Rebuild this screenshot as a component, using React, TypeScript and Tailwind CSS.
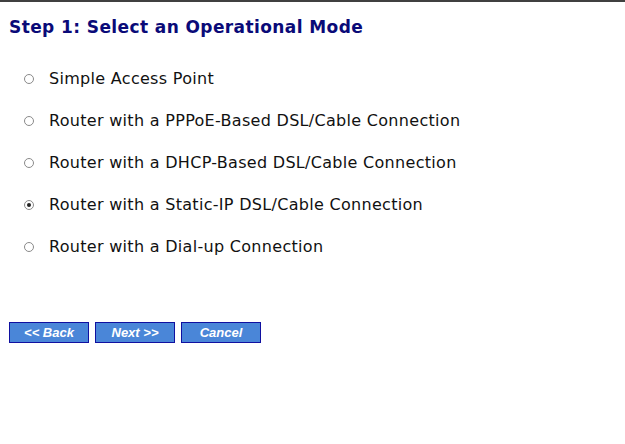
const options = [
  "Simple Access Point",
  "Router with a PPPoE-Based DSL/Cable Connection",
  "Router with a DHCP-Based DSL/Cable Connection",
  "Router with a Static-IP DSL/Cable Connection",
  "Router with a Dial-up Connection",
];

function Radio({ checked }: { checked: boolean }) {
  return (
    <span className="w-[10px] h-[10px] rounded-full border border-[#8a8a8a] bg-white flex items-center justify-center shrink-0">
      {checked && <span className="w-[4px] h-[4px] rounded-full bg-[#222]" />}
    </span>
  );
}

export default function App() {
  const selected = 3;
  return (
    <div className="w-[625px] h-[444px] bg-white border-t-2 border-[#404040] font-[family-name:'DejaVu_Sans',Verdana,sans-serif]">
      <h1 className="pl-[9px] pt-[15px] text-[17px] tracking-[0.4px] font-bold text-[#0a0a78] leading-[20px]">
        Step 1: Select an Operational Mode
      </h1>
      <div className="pt-[21px] flex flex-col">
        {options.map((o, i) => (
          <div key={o} className="h-[42px] flex items-center pl-[24px]">
            <Radio checked={i === selected} />
            <span className="ml-[15px] text-[16px] tracking-[0.3px] leading-[18px] text-[#111]">{o}</span>
          </div>
        ))}
      </div>
      <div className="pt-[54px] pl-[9px] flex gap-[6px] font-[family-name:'Liberation_Sans',Arial,sans-serif]">
        {["<< Back", "Next >>", "Cancel"].map((b) => (
          <button
            key={b}
            className="w-[80px] h-[21px] bg-[#4a86d8] border border-[#1010a0] text-white text-[13px] font-bold italic leading-none"
          >
            {b}
          </button>
        ))}
      </div>
    </div>
  );
}
